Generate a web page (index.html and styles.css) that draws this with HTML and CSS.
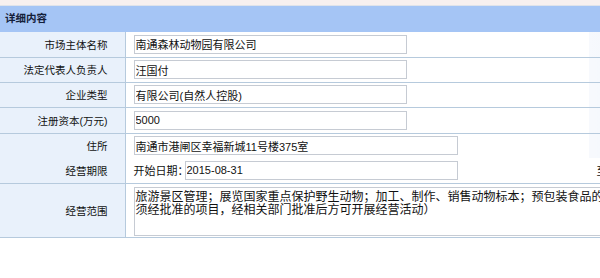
FILE: index.html
```html
<!DOCTYPE html>
<html lang="zh-CN">

<head>
    <meta charset="UTF-8">
    <title>详细内容</title>
    <link rel="stylesheet" href="styles.css">
</head>

<body>
    <div class="top-strip"></div>
    <div class="panel">
        <div class="panel-title">详细内容</div>
        <table class="detail">
            <colgroup>
                <col class="col-label">
                <col class="col-value">
                <col class="col-side">
            </colgroup>
            <tr class="row">
                <th>市场主体名称</th>
                <td><input class="field" type="text" value="南通森林动物园有限公司"></td>
                <td class="side"></td>
            </tr>
            <tr class="row">
                <th>法定代表人负责人</th>
                <td><input class="field" type="text" value="汪国付"></td>
                <td class="side"></td>
            </tr>
            <tr class="row">
                <th>企业类型</th>
                <td><input class="field" type="text" value="有限公司(自然人控股)"></td>
                <td class="side"></td>
            </tr>
            <tr class="row row-tall">
                <th>注册资本(万元)</th>
                <td><input class="field" type="text" value="5000"></td>
                <td class="side"></td>
            </tr>
            <tr class="row row-joined">
                <th>住所</th>
                <td><input class="field field-wide" type="text" value="南通市港闸区幸福新城11号楼375室"></td>
                <td class="side"></td>
            </tr>
            <tr class="row">
                <th>经营期限</th>
                <td colspan="2">
                    <div class="dates">
                        <span class="date-label">开始日期：</span>
                        <input class="field" type="text" value="2015-08-31">
                        <span class="date-end">至</span>
                    </div>
                </td>
            </tr>
            <tr class="row row-scope">
                <th>经营范围</th>
                <td colspan="2">
                    <textarea class="scope">旅游景区管理；展览国家重点保护野生动物；加工、制作、销售动物标本；预包装食品的零售（依法须经批准的项目，经相关部门批准后方可开展经营活动）</textarea>
                </td>
            </tr>
        </table>
    </div>
</body>

</html>
```

FILE: styles.css
```css
* {
    margin: 0;
    padding: 0;
    box-sizing: border-box;
}

body {
    width: 600px;
    height: 278px;
    overflow: hidden;
    background: #ffffff;
    font-family: "Liberation Sans", "Noto Sans CJK SC", sans-serif;
    color: #111111;
}

.top-strip {
    height: 6px;
    background: #f7f0ef;
    border-bottom: 1px solid #dfe3ea;
}

.panel {
    width: 600px;
    overflow: hidden;
}

.panel-title {
    height: 26px;
    line-height: 25px;
    padding-left: 5px;
    background: #a5c5f5;
    font-size: 10.5px;
    font-weight: 700;
    color: #14203a;
}

.detail {
    width: 680px;
    border-collapse: collapse;
    table-layout: fixed;
}

.col-label {
    width: 125px;
}

.col-value {
    width: 464px;
}

.detail th,
.detail td {
    height: 25px;
    border-bottom: 1px solid #b6cadd;
    vertical-align: middle;
}

.detail th {
    background: #e9f1fb;
    border-right: 1px solid #b6cadd;
    text-align: right;
    padding-right: 17px;
    font-size: 10.5px;
    font-weight: 400;
    color: #111111;
    white-space: nowrap;
}

.detail td {
    padding-left: 8px;
    background: #ffffff;
}

.detail td.side {
    padding: 0;
    background: linear-gradient(to right, #f7f9fd, #eef3fa);
}

.row-tall th,
.row-tall td {
    height: 26px;
}

.row-joined th,
.row-joined td {
    border-bottom: none;
}

.row-scope th,
.row-scope td {
    height: 54px;
    vertical-align: top;
}

.row-scope th {
    vertical-align: middle;
}

.row-scope td {
    padding-top: 3px;
}

.field {
    display: block;
    width: 273px;
    height: 19px;
    padding: 0 1px;
    border: 1px solid #c6cbd3;
    background: #ffffff;
    font-family: "Liberation Sans", "Noto Sans CJK SC", sans-serif;
    font-size: 11px;
    color: #111111;
    outline: none;
}

.field-wide {
    width: 324px;
}

.dates {
    display: flex;
    align-items: center;
}

.date-label {
    width: 51px;
    font-size: 11px;
    white-space: nowrap;
}

.date-end {
    margin-left: 139px;
    font-size: 11px;
    white-space: nowrap;
}

.scope {
    display: block;
    width: 540px;
    height: 49px;
    padding: 1px 1px;
    border: 1px solid #c6cbd3;
    resize: none;
    overflow: hidden;
    font-family: "Noto Sans CJK SC", sans-serif;
    font-size: 12px;
    line-height: 13px;
    color: #111111;
    outline: none;
}
```
